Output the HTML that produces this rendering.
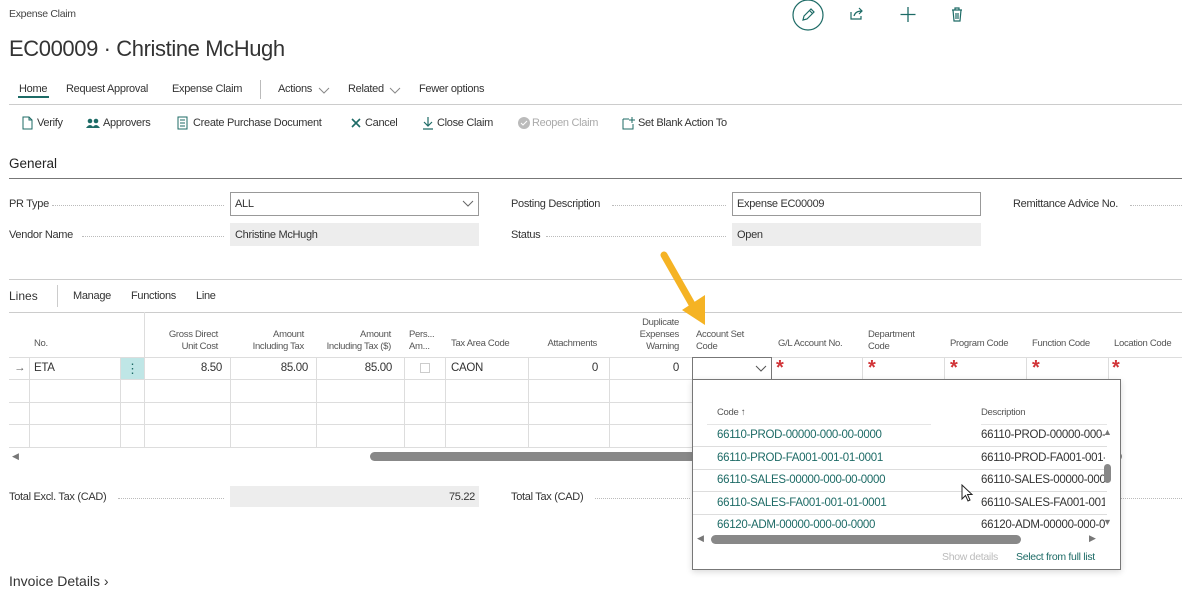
<!DOCTYPE html>
<html><head><meta charset="utf-8"><style>
*{margin:0;padding:0;box-sizing:border-box}
body{width:1182px;height:579px;overflow:hidden;background:#fff;font-family:"Liberation Sans",sans-serif;color:#333;position:relative}
.a{position:absolute;white-space:nowrap}
.s{font-size:11px;letter-spacing:-0.3px}
.m{font-size:11.5px;letter-spacing:-0.3px}
.h{font-size:9.5px;color:#555;letter-spacing:-0.3px;line-height:12px}
.r{text-align:right}
.dot{border-bottom:1px dotted #bbb;height:1px}
.vl{position:absolute;width:1px;background:#ddd}
.hl{position:absolute;height:1px;background:#ddd}
.star{position:absolute;color:#d13438;font-size:20px;font-weight:bold;top:357px}
.g{color:#1d6b66}
.ic{position:absolute;top:116px}
</style></head><body>
<div class="a s" style="left:9px;top:8px;font-size:10.5px;color:#444">Expense Claim</div>
<div class="a" style="left:9px;top:36px;font-size:22px;color:#333;letter-spacing:-0.4px">EC00009 · Christine McHugh</div>
<svg class="a" style="left:792px;top:0" width="180" height="32" viewBox="0 0 180 32">
<circle cx="16" cy="15" r="15" fill="none" stroke="#1d6b66" stroke-width="1.2"/>
<path d="M11 20 L12 16 L19 9 L22 12 L15 19 Z M17.5 10.5 L20.5 13.5" fill="none" stroke="#1d6b66" stroke-width="1.2"/>
<path d="M59 12 v7 h10 v-3 M62 16 c1-4 4-5 8-5 M67 8 l3 3 -3 3" fill="none" stroke="#1d6b66" stroke-width="1.2"/>
<path d="M116 7 v15 M108.5 14.5 h15" stroke="#1d6b66" stroke-width="1.3"/>
<path d="M160 10 h10 M163 10 v-2 h4 v2 M161 10 l1 11 h6 l1-11 M164 13 v6 M166 13 v6" fill="none" stroke="#1d6b66" stroke-width="1.2"/>
</svg>
<!-- nav -->
<div class="a s" style="left:19px;top:83px">Home</div>
<div class="a" style="left:18px;top:96px;width:31px;height:2px;background:#1d6b66"></div>
<div class="a s" style="left:66px;top:83px">Request Approval</div>
<div class="a s" style="left:172px;top:83px">Expense Claim</div>
<div class="a" style="left:260px;top:80px;width:1px;height:19px;background:#bbb"></div>
<div class="a s" style="left:278px;top:83px">Actions</div>
<svg class="a" style="left:318px;top:86px" width="12" height="8"><path d="M1 2 L6 7 L11 2" fill="none" stroke="#888"/></svg>
<div class="a s" style="left:348px;top:83px">Related</div>
<svg class="a" style="left:389px;top:86px" width="12" height="8"><path d="M1 2 L6 7 L11 2" fill="none" stroke="#888"/></svg>
<div class="a s" style="left:419px;top:83px">Fewer options</div>
<div class="hl" style="left:9px;right:0;top:104px;background:#ccc"></div>
<!-- actions -->
<svg class="ic" style="left:21px" width="14" height="14"><path d="M2 1 h6 l3 3 v9 h-9 Z M8 1 v3 h3" fill="none" stroke="#1d6b66"/></svg>
<div class="a s" style="left:37px;top:117px">Verify</div>
<svg class="ic" style="left:86px" width="14" height="14"><circle cx="4" cy="5" r="2.3" fill="#1d6b66"/><circle cx="10" cy="5" r="2.3" fill="#1d6b66"/><path d="M0 12 q4-6 8 0Z M6 12 q4-6 8 0Z" fill="#1d6b66"/></svg>
<div class="a s" style="left:103px;top:117px">Approvers</div>
<svg class="ic" style="left:176px" width="14" height="14"><path d="M2 1 h9 v12 h-9 Z M4 4 h5 M4 7 h5 M4 10 h5" fill="none" stroke="#1d6b66"/></svg>
<div class="a s" style="left:193px;top:117px">Create Purchase Document</div>
<svg class="ic" style="left:350px" width="12" height="14"><path d="M2 3 L10 11 M10 3 L2 11" stroke="#1d6b66" stroke-width="1.6"/></svg>
<div class="a s" style="left:365px;top:117px">Cancel</div>
<svg class="ic" style="left:422px" width="12" height="14"><path d="M6 1 v9 M2 6 l4 4 4-4 M1 13 h10" fill="none" stroke="#1d6b66" stroke-width="1.2"/></svg>
<div class="a s" style="left:437px;top:117px">Close Claim</div>
<svg class="ic" style="left:517px" width="14" height="14"><circle cx="7" cy="7" r="6" fill="#bbb"/><path d="M4 7 l2 2 4-4" stroke="#fff" fill="none"/></svg>
<div class="a s" style="left:532px;top:117px;color:#aaa">Reopen Claim</div>
<svg class="ic" style="left:622px" width="14" height="14"><path d="M1 3 h6 M1 3 v10 h10 v-5 M10 1 v6 M7 4 h6" fill="none" stroke="#1d6b66"/></svg>
<div class="a s" style="left:638px;top:117px">Set Blank Action To</div>
<!-- General -->
<div class="a" style="left:9px;top:156px;font-size:13.5px;color:#222">General</div>
<div class="hl" style="left:9px;right:0;top:178px;background:#777"></div>
<div class="a s" style="left:9px;top:198px">PR Type</div><div class="a dot" style="left:52px;width:172px;top:205px"></div>
<div class="a" style="left:230px;top:192px;width:249px;height:24px;border:1px solid #999"></div>
<div class="a s" style="left:235px;top:198px">ALL</div>
<svg class="a" style="left:462px;top:200px" width="12" height="8"><path d="M1 1 L6 6 L11 1" fill="none" stroke="#666"/></svg>
<div class="a s" style="left:511px;top:198px">Posting Description</div><div class="a dot" style="left:612px;width:114px;top:205px"></div>
<div class="a" style="left:732px;top:192px;width:249px;height:24px;border:1px solid #999"></div>
<div class="a s" style="left:737px;top:198px">Expense EC00009</div>
<div class="a s" style="left:1013px;top:198px">Remittance Advice No.</div><div class="a dot" style="left:1130px;width:52px;top:205px"></div>
<div class="a s" style="left:9px;top:229px">Vendor Name</div><div class="a dot" style="left:82px;width:142px;top:236px"></div>
<div class="a" style="left:230px;top:223px;width:249px;height:23px;background:#ededed"></div>
<div class="a s" style="left:235px;top:229px">Christine McHugh</div>
<div class="a s" style="left:511px;top:229px">Status</div><div class="a dot" style="left:546px;width:180px;top:236px"></div>
<div class="a" style="left:732px;top:223px;width:249px;height:23px;background:#ededed"></div>
<div class="a s" style="left:737px;top:229px">Open</div>
<div class="hl" style="left:9px;right:0;top:279px;background:#ccc"></div>
<!-- Lines -->
<div class="a" style="left:9px;top:289px;font-size:12px">Lines</div>
<div class="a" style="left:57px;top:285px;width:1px;height:22px;background:#ccc"></div>
<div class="a s" style="left:73px;top:290px">Manage</div>
<div class="a s" style="left:131px;top:290px">Functions</div>
<div class="a s" style="left:196px;top:290px">Line</div>
<div class="hl" style="left:9px;right:0;top:312px;background:#ccc"></div>
<div class="hl" style="left:9px;right:0;top:357px"></div>
<div class="hl" style="left:9px;width:683px;top:379px"></div>
<div class="hl" style="left:9px;width:683px;top:402px"></div>
<div class="hl" style="left:9px;width:683px;top:424px"></div>
<div class="hl" style="left:9px;width:683px;top:447px"></div>
<div class="vl" style="left:29px;top:357px;height:90px"></div>
<div class="vl" style="left:120px;top:357px;height:90px"></div>
<div class="vl" style="left:144px;top:312px;height:135px"></div>
<div class="vl" style="left:230px;top:357px;height:90px"></div>
<div class="vl" style="left:316px;top:357px;height:90px"></div>
<div class="vl" style="left:404px;top:357px;height:90px"></div>
<div class="vl" style="left:445px;top:357px;height:90px"></div>
<div class="vl" style="left:528px;top:357px;height:90px"></div>
<div class="vl" style="left:609px;top:357px;height:90px"></div>
<div class="vl" style="left:862px;top:357px;height:22px"></div>
<div class="vl" style="left:944px;top:357px;height:22px"></div>
<div class="vl" style="left:1026px;top:357px;height:22px"></div>
<div class="vl" style="left:1108px;top:357px;height:22px"></div>
<div class="a h" style="left:34px;top:338px">No.</div>
<div class="a h r" style="left:140px;width:78px;top:329px">Gross Direct<br>Unit Cost</div>
<div class="a h r" style="left:220px;width:84px;top:329px">Amount<br>Including Tax</div>
<div class="a h r" style="left:300px;width:91px;top:329px">Amount<br>Including Tax ($)</div>
<div class="a h" style="left:409px;top:329px">Pers...<br>Am...</div>
<div class="a h" style="left:451px;top:338px">Tax Area Code</div>
<div class="a h r" style="left:520px;width:77px;top:338px">Attachments</div>
<div class="a h r" style="left:600px;width:79px;top:317px">Duplicate<br>Expenses<br>Warning</div>
<div class="a h" style="left:696px;top:329px">Account Set<br>Code</div>
<div class="a h" style="left:778px;top:338px">G/L Account No.</div>
<div class="a h" style="left:868px;top:329px">Department<br>Code</div>
<div class="a h" style="left:950px;top:338px">Program Code</div>
<div class="a h" style="left:1032px;top:338px">Function Code</div>
<div class="a h" style="left:1114px;top:338px">Location Code</div>
<div class="a m" style="left:14px;top:362px;color:#555">→</div>
<div class="a m" style="left:34px;top:362px">ETA</div>
<div class="a" style="left:121px;top:358px;width:23px;height:21px;background:#bfe6e6;text-align:center;font-size:13px;color:#1d6b66;line-height:21px">⋮</div>
<div class="a m r" style="left:150px;width:72px;top:362px">8.50</div>
<div class="a m r" style="left:236px;width:72px;top:362px">85.00</div>
<div class="a m r" style="left:320px;width:72px;top:362px">85.00</div>
<div class="a" style="left:420px;top:363px;width:10px;height:10px;border:1px solid #ccc"></div>
<div class="a m" style="left:451px;top:362px">CAON</div>
<div class="a m r" style="left:530px;width:68px;top:362px">0</div>
<div class="a m r" style="left:610px;width:69px;top:362px">0</div>
<div class="a" style="left:692px;top:357px;width:80px;height:23px;border:1px solid #777;background:#fff"></div>
<svg class="a" style="left:755px;top:365px" width="12" height="8"><path d="M1 1 L6 6 L11 1" fill="none" stroke="#555"/></svg>
<div class="star" style="left:776px">*</div><div class="star" style="left:868px">*</div><div class="star" style="left:950px">*</div><div class="star" style="left:1032px">*</div><div class="star" style="left:1112px">*</div>
<div class="a" style="left:12px;top:451px;font-size:9px;color:#777">◀</div>
<div class="a" style="left:370px;top:452px;width:752px;height:9px;border-radius:5px;background:#888"></div>
<div class="a s" style="left:9px;top:491px">Total Excl. Tax (CAD)</div><div class="a dot" style="left:118px;width:106px;top:498px"></div>
<div class="a" style="left:230px;top:486px;width:249px;height:21px;background:#ededed"></div>
<div class="a s r" style="left:380px;width:95px;top:491px">75.22</div>
<div class="a s" style="left:511px;top:491px">Total Tax (CAD)</div><div class="a dot" style="left:595px;width:95px;top:498px"></div>
<div class="a dot" style="left:1120px;width:62px;top:498px"></div>
<div class="a" style="left:9px;top:573px;font-size:14px">Invoice Details ›</div>
<!-- popup -->
<div class="a" style="left:692px;top:379px;width:429px;height:191px;border:1px solid #777;background:#fff;box-shadow:0 2px 6px rgba(0,0,0,.15)">
<div class="a h" style="left:24px;top:27px;font-size:9.5px">Code ↑</div>
<div class="a h" style="left:288px;top:27px;font-size:9.5px">Description</div>
<div class="hl" style="left:14px;width:224px;top:44px;background:#e5e5e5"></div>
<div class="hl" style="left:288px;width:126px;top:44px;background:#e5e5e5"></div>
<div style="position:absolute;left:0;top:44px;width:414px;overflow:hidden;height:110px">
<div class="a m g" style="left:24px;top:5px">66110-PROD-00000-000-00-0000</div><div class="a m" style="left:288px;top:5px;width:124px;overflow:hidden">66110-PROD-00000-000-00</div>
<div class="hl" style="left:0;width:414px;top:22px"></div>
<div class="a m g" style="left:24px;top:28px">66110-PROD-FA001-001-01-0001</div><div class="a m" style="left:288px;top:28px;width:124px;overflow:hidden">66110-PROD-FA001-001-01</div>
<div class="hl" style="left:0;width:414px;top:45px"></div>
<div class="a m g" style="left:24px;top:50px">66110-SALES-00000-000-00-0000</div><div class="a m" style="left:288px;top:50px;width:124px;overflow:hidden">66110-SALES-00000-000-00</div>
<div class="hl" style="left:0;width:414px;top:67px"></div>
<div class="a m g" style="left:24px;top:73px">66110-SALES-FA001-001-01-0001</div><div class="a m" style="left:288px;top:73px;width:124px;overflow:hidden">66110-SALES-FA001-001-01</div>
<div class="hl" style="left:0;width:414px;top:90px"></div>
<div class="a m g" style="left:24px;top:95px">66120-ADM-00000-000-00-0000</div><div class="a m" style="left:288px;top:95px;width:124px;overflow:hidden">66120-ADM-00000-000-00</div>
</div>
<div class="a" style="left:410px;top:47px;font-size:9px;color:#777">▲</div>
<div class="a" style="left:411px;top:84px;width:7px;height:19px;border-radius:4px;background:#888"></div>
<div class="a" style="left:410px;top:137px;font-size:9px;color:#777">▼</div>
<div class="a" style="left:4px;top:153px;font-size:9px;color:#777">◀</div>
<div class="a" style="left:18px;top:155px;width:310px;height:9px;border-radius:5px;background:#888"></div>
<div class="a" style="left:396px;top:153px;font-size:9px;color:#777">▶</div>
<div class="a s" style="left:249px;top:171px;color:#bbb;font-size:10.5px">Show details</div>
<div class="a s g" style="left:323px;top:171px;font-size:10.5px">Select from full list</div>
</div>
<svg class="a" style="left:961px;top:484px" width="14" height="20" viewBox="0 0 14 20"><path d="M1 1 L1 15 L4.5 11.5 L7 17 L9 16 L6.5 10.5 L11 10.5 Z" fill="#fff" stroke="#222" stroke-width="1"/></svg>
<svg class="a" style="left:655px;top:248px" width="60" height="82" viewBox="0 0 60 82">
<path d="M9 7 L38 58" stroke="#f5b324" stroke-width="7" stroke-linecap="round"/>
<path d="M27 62 L50 77 L50 47 Z" fill="#f5b324"/>
</svg>
</body></html>
